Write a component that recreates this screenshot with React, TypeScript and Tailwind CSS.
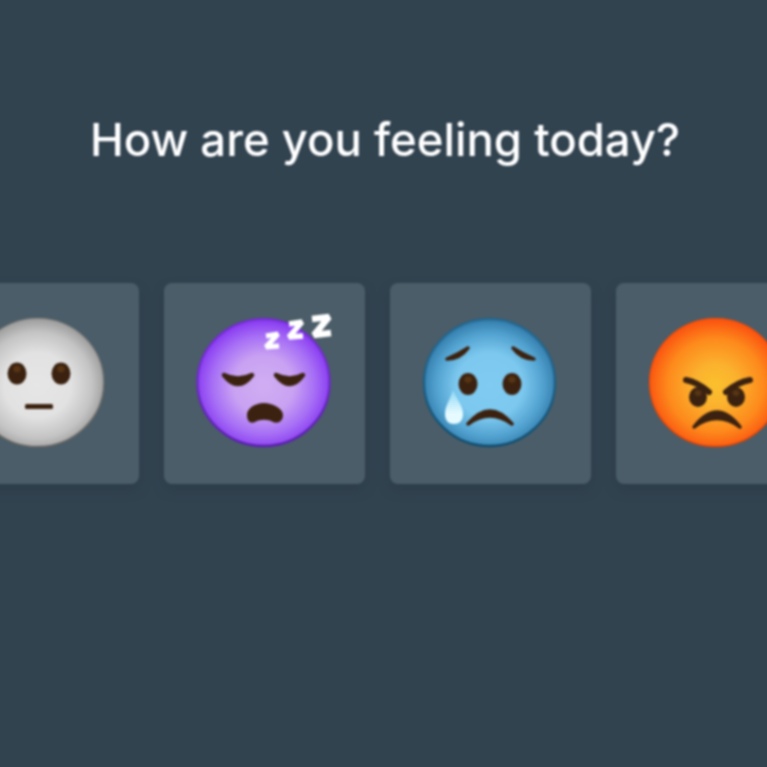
import React from "react";

function Eye({ cx, cy, rx = 9.5, ry = 11 }: { cx: number; cy: number; rx?: number; ry?: number }) {
  return (
    <g>
      <ellipse cx={cx} cy={cy} rx={rx} ry={ry} fill="#3b2210" />
      <ellipse cx={cx} cy={cy - ry * 0.4} rx={rx * 0.38} ry={ry * 0.3} fill="#6b4318" opacity="0.6" />
    </g>
  );
}

function Defs({ id, stops, rim }: { id: string; stops: [string, string][]; rim: string }) {
  return (
    <defs>
      <radialGradient id={id} cx="50%" cy="52%" r="50%">
        {stops.map(([o, c]) => (
          <stop key={o} offset={o} stopColor={c} />
        ))}
      </radialGradient>
      <linearGradient id={id + "r"} x1="0" y1="0" x2="0" y2="1">
        <stop offset="0.3" stopColor={rim} stopOpacity="0.45" />
        <stop offset="1" stopColor={rim} />
      </linearGradient>
    </defs>
  );
}

const BROWN = "#3b2210";

function Neutral() {
  return (
    <svg width="133" height="129" viewBox="0 0 133 129" className="overflow-visible">
      <Defs id="gr" rim="#6f6a64" stops={[["0", "#e6e6e6"], ["0.5", "#e2e2e2"], ["0.82", "#c4c4c4"], ["1", "#a2a2a2"]]} />
      <ellipse cx="66.5" cy="64.5" rx="66.5" ry="64.5" fill="url(#gr)" />
      <ellipse cx="66.5" cy="64.5" rx="66" ry="64" fill="none" stroke="url(#grr)" strokeWidth="1.5" />
      <Eye cx={46} cy={55.5} />
      <Eye cx={90} cy={55.5} />
      <rect x="54" y="86" width="28" height="5" rx="1.5" fill={BROWN} />
    </svg>
  );
}

function Sleepy() {
  return (
    <svg width="133" height="129" viewBox="0 0 133 129" className="overflow-visible">
      <Defs id="pu" rim="#5a1fb0" stops={[["0", "#d0aef3"], ["0.45", "#c9a2f2"], ["0.76", "#a76ff5"], ["1", "#8a3cf2"]]} />
      <ellipse cx="66.5" cy="64.5" rx="67" ry="64.5" fill="url(#pu)" />
      <ellipse cx="66.5" cy="64.5" rx="66" ry="63.5" fill="none" stroke="url(#pur)" strokeWidth="2.5" />
      <path d="M27 57 Q41 75 55 57 Q41 64 27 57Z" fill={BROWN} stroke={BROWN} strokeWidth="4.5" strokeLinejoin="round" />
      <path d="M79 57 Q93 75 106 57 Q93 64 79 57Z" fill={BROWN} stroke={BROWN} strokeWidth="4.5" strokeLinejoin="round" />
      <path d="M50 97 C50 90 59 85 67 85 C75 85 86 90 86 97 C86 104 80 106 76 104 C71 101 63 101 58 104 C54 106 50 104 50 97Z" fill={BROWN} />
      <g fill="none" stroke="#ffffff" strokeLinejoin="bevel">
        <path d="M69 18 L81 16 L69 29 L82 28" strokeWidth="5" />
        <path d="M92 6 L105 4 L92 19 L106 18" strokeWidth="5.5" />
        <path d="M115 1 L132 -1 L117 17 L134 15" strokeWidth="6.5" />
      </g>
    </svg>
  );
}

function Sad() {
  return (
    <svg width="133" height="129" viewBox="0 0 133 129" className="overflow-visible">
      <defs>
        <linearGradient id="tear" x1="0" y1="0" x2="0" y2="1">
          <stop offset="0" stopColor="#8fd8f5" />
          <stop offset="0.7" stopColor="#e6fbff" />
        </linearGradient>
      </defs>
      <Defs id="bl" rim="#0f4c6e" stops={[["0", "#80cbf1"], ["0.5", "#7cc8ef"], ["0.8", "#52a2d0"], ["1", "#357fae"]]} />
      <ellipse cx="66.5" cy="64.5" rx="66.5" ry="64.5" fill="url(#bl)" />
      <ellipse cx="66.5" cy="64.5" rx="65.5" ry="63.5" fill="none" stroke="url(#blr)" strokeWidth="2.5" />
      <path d="M24 41 Q37 41 45 30 Q36 36 24 41Z" fill={BROWN} stroke={BROWN} strokeWidth="3.5" strokeLinejoin="round" />
      <path d="M90 30 Q98 41 111 41 Q99 36 90 30Z" fill={BROWN} stroke={BROWN} strokeWidth="3.5" strokeLinejoin="round" />
      <Eye cx={45} cy={66} />
      <Eye cx={89} cy={66} />
      <path d="M45 106 Q67 80 89 106 Q67 90 45 106Z" fill={BROWN} stroke={BROWN} strokeWidth="3.5" strokeLinejoin="round" />
      <path d="M30 72 C34 82 40 88 40 96 C40 103 36 106 31 106 C26 106 22 103 22 96 C22 88 27 82 30 72Z" fill="url(#tear)" />
    </svg>
  );
}

function Angry() {
  return (
    <svg width="133" height="129" viewBox="0 0 133 129" className="overflow-visible">
      <Defs id="re" rim="#d8400a" stops={[["0", "#fbc02d"], ["0.32", "#fbb22e"], ["0.72", "#fd8a1c"], ["1", "#fb5610"]]} />
      <ellipse cx="66.5" cy="64.5" rx="66.5" ry="64.5" fill="url(#re)" />
      <ellipse cx="66.5" cy="64.5" rx="66" ry="64" fill="none" stroke="url(#rer)" strokeWidth="1.5" />
      <path d="M37 62 Q48 64 60 74" fill="none" stroke={BROWN} strokeWidth="6" strokeLinecap="round" />
      <path d="M101 62 Q89 64 77 74" fill="none" stroke={BROWN} strokeWidth="6" strokeLinecap="round" />
      <Eye cx={49} cy={79} rx={9} ry={10} />
      <Eye cx={87} cy={79} rx={9} ry={10} />
      <path d="M45 109 Q68 79 91 109 Q68 92 45 109Z" fill={BROWN} stroke={BROWN} strokeWidth="3.5" strokeLinejoin="round" />
    </svg>
  );
}

function Card({ children }: { children: React.ReactNode }) {
  return (
    <div className="flex h-[201px] w-[201px] shrink-0 items-center justify-center rounded-[8px] bg-[#4b5d68] pr-[2px] pb-[3px] shadow-[0_6px_12px_rgba(38,52,64,0.35)]">
      {children}
    </div>
  );
}

export default function App() {
  return (
    <div className="h-[767px] w-[767px] overflow-hidden bg-[#324350]">
      <div className="h-full w-full blur-[1px]">
        <h1 className="pt-[112px] pl-[3px] text-center text-[45.5px] leading-[56px] font-medium whitespace-nowrap text-white font-['Inter',sans-serif]">
          How are you feeling today?
        </h1>
        <div className="mt-[115px] ml-[-62px] flex gap-[25px]">
          <Card><Neutral /></Card>
          <Card><Sleepy /></Card>
          <Card><Sad /></Card>
          <Card><Angry /></Card>
        </div>
      </div>
    </div>
  );
}
